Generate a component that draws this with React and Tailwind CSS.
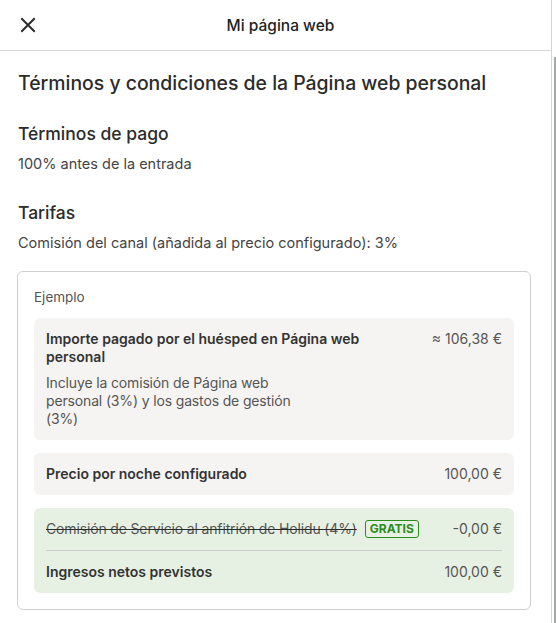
import React from "react";

export default function App() {
  return (
    <div className="relative h-[623px] w-[556px] overflow-hidden bg-white text-[#2b2b2b]" style={{ fontFamily: "Inter, 'Noto Sans', sans-serif" }}>
      <div className="w-[552px] border-r border-[#d4d4d4] h-full">
        <header className="relative flex h-[51px] items-center justify-center border-b border-[#d4d4d4] pl-[10px] pt-px">
          <button className="absolute left-[19px] top-[16px] flex h-[18px] w-[18px] items-center justify-center text-[#2b2b2b]">
            <svg width="18" height="18" viewBox="0 0 18 18" fill="none" stroke="currentColor" strokeWidth="2" strokeLinecap="square">
              <path d="M3 3L15 15M15 3L3 15" />
            </svg>
          </button>
          <h1 className="text-[15.5px] font-medium text-[#1f1f1f]">Mi página web</h1>
        </header>

        <main className="px-[17px] pt-[18px]">
          <h2 className="text-[19.4px] leading-[28px] font-medium text-[#2b2b2b] pl-px">Términos y condiciones de la Página web personal</h2>

          <h3 className="mt-[24px] text-[17.5px] leading-[26px] font-medium pl-px">Términos de pago</h3>
          <p className="mt-[6px] text-[14.5px] leading-[22px] text-[#444] pl-px">100% antes de la entrada</p>

          <h3 className="mt-[25px] text-[17.5px] leading-[26px] font-medium pl-px">Tarifas</h3>
          <p className="mt-[6px] text-[14.5px] leading-[22px] text-[#444] pl-px">Comisión del canal (añadida al precio configurado): 3%</p>

          <section className="mt-[17px] w-[514px] rounded-[6px] border border-[#d2d0cc] px-[16px] pt-[16px] pb-[16px]">
            <div className="text-[13.5px] leading-[18px] text-[#555]">Ejemplo</div>

            <div className="mt-[12px] flex justify-between rounded-[6px] bg-[#f5f4f2] px-[12px] py-[12px]">
              <div className="w-[340px]">
                <div className="text-[14px] leading-[18px] font-semibold text-[#333]">Importe pagado por el huésped en Página web personal</div>
                <div className="mt-[8px] max-w-[260px] text-[14px] leading-[18px] tracking-[-0.15px] text-[#555]">Incluye la comisión de Página web personal (3%) y los gastos de gestión (3%)</div>
              </div>
              <div className="text-[14px] leading-[18px] text-[#555]">≈ 106,38 €</div>
            </div>

            <div className="mt-[13px] flex justify-between rounded-[6px] bg-[#f5f4f2] px-[12px] py-[12px]">
              <div className="text-[14px] leading-[18px] font-semibold text-[#333]">Precio por noche configurado</div>
              <div className="text-[14px] leading-[18px] text-[#555]">100,00 €</div>
            </div>

            <div className="mt-[13px] rounded-[6px] bg-[#e6f1e4] px-[12px] pt-[12px] pb-[12px]">
              <div className="flex items-center justify-between h-[18px]">
                <div className="flex items-center gap-[8px]">
                  <span className="text-[14px] leading-[18px] tracking-[-0.15px] text-[#555] line-through decoration-[#2b2b2b]">Comisión de Servicio al anfitrión de Holidu (4%)</span>
                  <span className="rounded-[3px] border border-[#2e8b1e] px-[4px] text-[12px] leading-[16px] font-bold text-[#2e8b1e]">GRATIS</span>
                </div>
                <div className="text-[14px] leading-[18px] text-[#555]">-0,00 €</div>
              </div>
              <div className="mt-[12px] mb-[12px] h-px bg-[#cfcfcb]" />
              <div className="flex justify-between">
                <div className="text-[14px] leading-[18px] font-semibold text-[#333]">Ingresos netos previstos</div>
                <div className="text-[14px] leading-[18px] text-[#555]">100,00 €</div>
              </div>
            </div>
          </section>
        </main>
      </div>
      <div className="absolute right-0 top-[57px] bottom-0 w-[2px] bg-[#a3aaab]" />
    </div>
  );
}
